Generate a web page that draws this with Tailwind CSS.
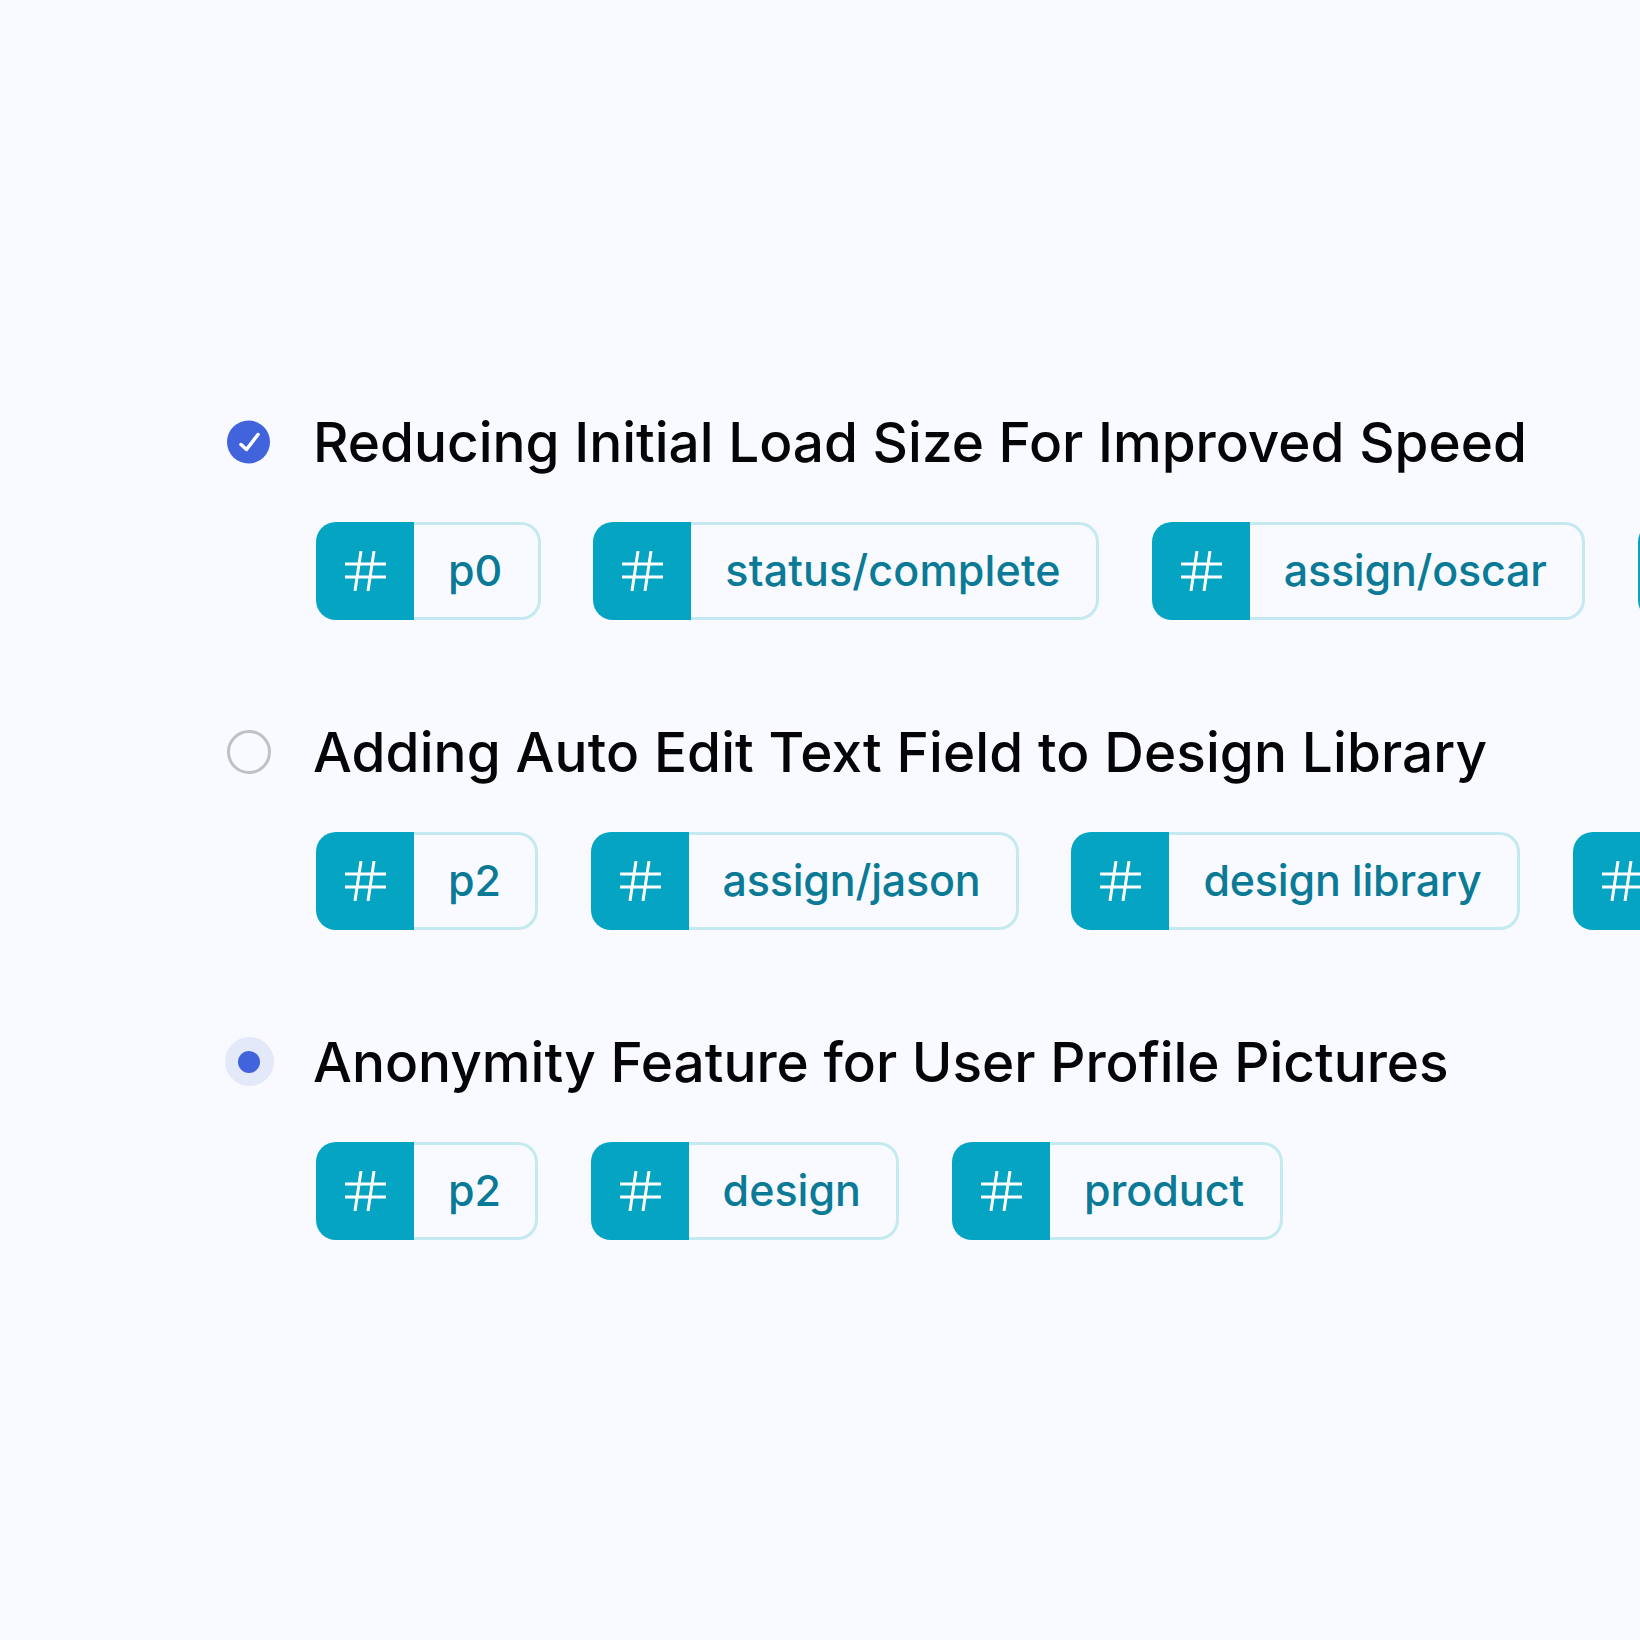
<!DOCTYPE html>
<html lang="en">
<head>
    <meta charset="UTF-8">
    <title>Tasks</title>
    <script src="https://cdn.jsdelivr.net/npm/@tailwindcss/browser@4"></script>
</head>
<body class="bg-[#f8faff] font-['Inter',sans-serif] overflow-hidden">
    <div class="w-[1640px] h-[1640px] overflow-hidden pt-[408px] pl-[214px] flex flex-col gap-[98px]">

        <!-- task 1 -->
        <div class="flex flex-col gap-[46px]">
            <div class="flex items-center h-[68px]">
                <div class="w-[70px] flex justify-center">
                    <svg width="44" height="44" viewBox="0 0 44 44">
                        <circle cx="21.5" cy="22" r="21.5" fill="#4163dc"/>
                        <path d="M14 24.5 L19.5 29.5 L31 14.5" fill="none" stroke="#fff" stroke-width="3.5" stroke-linecap="round" stroke-linejoin="round"/>
                    </svg>
                </div>
                <h2 class="ml-[29px] text-[54.9px] leading-[68px] text-[#050507] font-medium whitespace-nowrap">Reducing Initial Load Size For Improved Speed</h2>
            </div>
            <div class="flex gap-[52.5px] ml-[102px]">
                <div class="flex shrink-0 h-[98px]"><div class="w-[98px] bg-[#06a4c3] rounded-l-[20px] flex items-center justify-center"><svg width="42" height="40" viewBox="0 0 42 40" fill="none" stroke="#fff" stroke-width="3"><path d="M1 13H42M1 26H42M17 0L11 40M30 0L24 40"/></svg></div><div class="border-[3px] border-l-0 border-[#c5e9f0] rounded-r-[20px] flex items-center pl-[34px] pr-[35.5px] pb-[2px] text-[43px] font-medium text-[#0b7a96]">p0</div></div>
                <div class="flex shrink-0 h-[98px]"><div class="w-[98px] bg-[#06a4c3] rounded-l-[20px] flex items-center justify-center"><svg width="42" height="40" viewBox="0 0 42 40" fill="none" stroke="#fff" stroke-width="3"><path d="M1 13H42M1 26H42M17 0L11 40M30 0L24 40"/></svg></div><div class="border-[3px] border-l-0 border-[#c5e9f0] rounded-r-[20px] flex items-center pl-[34px] pr-[35.5px] pb-[2px] text-[43px] tracking-[0.15px] font-medium text-[#0b7a96]">status/complete</div></div>
                <div class="flex shrink-0 h-[98px]"><div class="w-[98px] bg-[#06a4c3] rounded-l-[20px] flex items-center justify-center"><svg width="42" height="40" viewBox="0 0 42 40" fill="none" stroke="#fff" stroke-width="3"><path d="M1 13H42M1 26H42M17 0L11 40M30 0L24 40"/></svg></div><div class="border-[3px] border-l-0 border-[#c5e9f0] rounded-r-[20px] flex items-center pl-[34px] pr-[35.5px] pb-[2px] text-[43px] tracking-[-0.2px] font-medium text-[#0b7a96]">assign/oscar</div></div>
                <div class="flex shrink-0 h-[98px]"><div class="w-[98px] bg-[#06a4c3] rounded-l-[20px]"></div></div>
            </div>
        </div>

        <!-- task 2 -->
        <div class="flex flex-col gap-[46px]">
            <div class="flex items-center h-[68px]">
                <div class="w-[70px] flex justify-center">
                    <div class="w-[44px] h-[44px] rounded-full border-[3px] border-[#bfc1c6]"></div>
                </div>
                <h2 class="ml-[29px] text-[54.9px] leading-[68px] tracking-[0.1px] text-[#050507] font-medium whitespace-nowrap">Adding Auto Edit Text Field to Design Library</h2>
            </div>
            <div class="flex gap-[52.5px] ml-[102px]">
                <div class="flex shrink-0 h-[98px]"><div class="w-[98px] bg-[#06a4c3] rounded-l-[20px] flex items-center justify-center"><svg width="42" height="40" viewBox="0 0 42 40" fill="none" stroke="#fff" stroke-width="3"><path d="M1 13H42M1 26H42M17 0L11 40M30 0L24 40"/></svg></div><div class="border-[3px] border-l-0 border-[#c5e9f0] rounded-r-[20px] flex items-center pl-[34px] pr-[34px] pb-[2px] text-[43px] font-medium text-[#0b7a96]">p2</div></div>
                <div class="flex shrink-0 h-[98px]"><div class="w-[98px] bg-[#06a4c3] rounded-l-[20px] flex items-center justify-center"><svg width="42" height="40" viewBox="0 0 42 40" fill="none" stroke="#fff" stroke-width="3"><path d="M1 13H42M1 26H42M17 0L11 40M30 0L24 40"/></svg></div><div class="border-[3px] border-l-0 border-[#c5e9f0] rounded-r-[20px] flex items-center pl-[34px] pr-[35.5px] pb-[2px] text-[43px] tracking-[-0.2px] font-medium text-[#0b7a96]">assign/jason</div></div>
                <div class="flex shrink-0 h-[98px]"><div class="w-[98px] bg-[#06a4c3] rounded-l-[20px] flex items-center justify-center"><svg width="42" height="40" viewBox="0 0 42 40" fill="none" stroke="#fff" stroke-width="3"><path d="M1 13H42M1 26H42M17 0L11 40M30 0L24 40"/></svg></div><div class="border-[3px] border-l-0 border-[#c5e9f0] rounded-r-[20px] flex items-center pl-[34px] pr-[35.5px] pb-[2px] text-[43px] tracking-[-0.2px] font-medium text-[#0b7a96]">design library</div></div>
                <div class="flex shrink-0 h-[98px]"><div class="w-[98px] bg-[#06a4c3] rounded-l-[20px] flex items-center justify-center"><svg width="42" height="40" viewBox="0 0 42 40" fill="none" stroke="#fff" stroke-width="3"><path d="M1 13H42M1 26H42M17 0L11 40M30 0L24 40"/></svg></div></div>
            </div>
        </div>

        <!-- task 3 -->
        <div class="flex flex-col gap-[46px]">
            <div class="flex items-center h-[68px]">
                <div class="w-[70px] flex justify-center">
                    <div class="w-[49px] h-[49px] -mt-[1px] rounded-full bg-[#e4e9f9] flex items-center justify-center">
                        <div class="w-[22px] h-[22px] rounded-full bg-[#4163dc]"></div>
                    </div>
                </div>
                <h2 class="ml-[29px] text-[54.9px] leading-[68px] text-[#050507] font-medium whitespace-nowrap">Anonymity Feature for User Profile Pictures</h2>
            </div>
            <div class="flex gap-[52.5px] ml-[102px]">
                <div class="flex shrink-0 h-[98px]"><div class="w-[98px] bg-[#06a4c3] rounded-l-[20px] flex items-center justify-center"><svg width="42" height="40" viewBox="0 0 42 40" fill="none" stroke="#fff" stroke-width="3"><path d="M1 13H42M1 26H42M17 0L11 40M30 0L24 40"/></svg></div><div class="border-[3px] border-l-0 border-[#c5e9f0] rounded-r-[20px] flex items-center pl-[34px] pr-[34px] pb-[2px] text-[43px] font-medium text-[#0b7a96]">p2</div></div>
                <div class="flex shrink-0 h-[98px]"><div class="w-[98px] bg-[#06a4c3] rounded-l-[20px] flex items-center justify-center"><svg width="42" height="40" viewBox="0 0 42 40" fill="none" stroke="#fff" stroke-width="3"><path d="M1 13H42M1 26H42M17 0L11 40M30 0L24 40"/></svg></div><div class="border-[3px] border-l-0 border-[#c5e9f0] rounded-r-[20px] flex items-center pl-[34px] pr-[35.5px] pb-[2px] text-[43px] font-medium text-[#0b7a96]">design</div></div>
                <div class="flex shrink-0 h-[98px]"><div class="w-[98px] bg-[#06a4c3] rounded-l-[20px] flex items-center justify-center"><svg width="42" height="40" viewBox="0 0 42 40" fill="none" stroke="#fff" stroke-width="3"><path d="M1 13H42M1 26H42M17 0L11 40M30 0L24 40"/></svg></div><div class="border-[3px] border-l-0 border-[#c5e9f0] rounded-r-[20px] flex items-center pl-[34px] pr-[35.5px] pb-[2px] text-[43px] font-medium text-[#0b7a96]">product</div></div>
            </div>
        </div>
    </div>
</body>
</html>
